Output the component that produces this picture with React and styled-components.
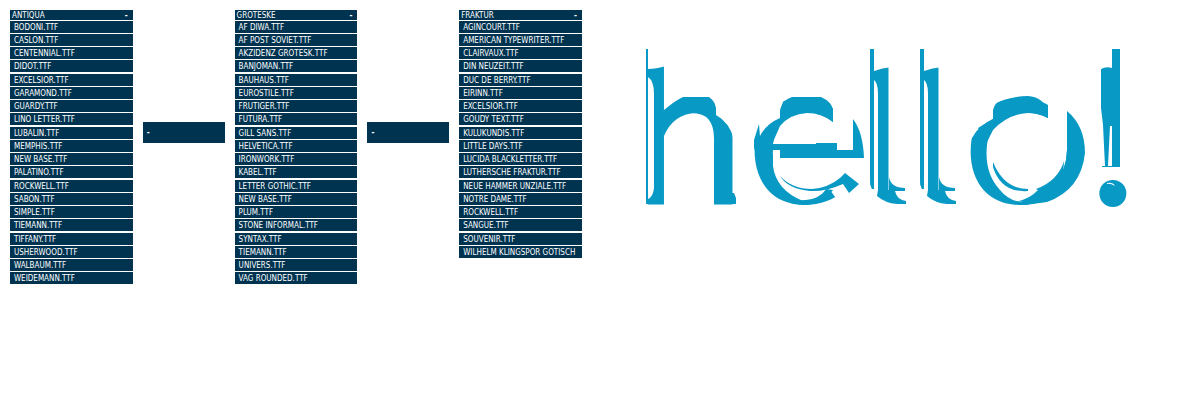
import React from "react";
import styled, { createGlobalStyle } from "styled-components";

const GlobalStyle = createGlobalStyle`
  * { box-sizing: border-box; }
  body {
    margin: 0;
    background: #fff;
    font-family: "DejaVu Sans Condensed", "DejaVu Sans Mono", sans-serif;
  }
`;

const Page = styled.main`
  display: grid;
  grid-template-columns: 572fr 608fr;
  padding: 10px;
`;

const Picker = styled.div`
  display: grid;
  grid-template-columns: 123fr 82fr 123fr 82fr 123fr;
  column-gap: 10px;
  align-items: start;
`;

const Column = styled.section`
  min-width: 0;
  color: #fff;
  font-size: 8px;
`;

const ColumnHead = styled.header`
  display: flex;
  justify-content: space-between;
  height: 10px;
  margin-bottom: 1px;
  padding: 1px 5px 0 2px;
  background: #003350;
  line-height: 10px;
`;

const Title = styled.h2`
  margin: 0;
  font: inherit;
`;

const Toggle = styled.button`
  padding: 0;
  border: 0;
  background: none;
  color: inherit;
  font: inherit;
  font-weight: 700;
`;

const FontList = styled.ul`
  margin: 0;
  padding: 0;
  list-style: none;
`;

const FontRow = styled.li`
  height: 12px;
  margin-bottom: 1px;
  padding: 1px 0 0 4px;
  overflow: hidden;
  background: #003350;
  line-height: 12px;
  white-space: nowrap;

  &:nth-child(4n) { margin-bottom: 2px; }
`;

const FontLink = styled.a`
  color: inherit;
  text-decoration: none;
`;

const Slot = styled.div`
  height: 21px;
  margin-top: 112px;
  padding-left: 4px;
  background: #003350;
  color: #fff;
  font-size: 8px;
  font-weight: 700;
  line-height: 21px;
`;

const Preview = styled.svg`
  display: block;
  width: 490px;
  max-width: 100%;
  margin: 30px 0 0 58px;
  fill: #0899c5;
`;

const Cut = styled.g`
  fill: #fff;
`;

const groups = [
  ["ANTIQUA", ["BODONI", "CASLON", "CENTENNIAL", "DIDOT", "EXCELSIOR", "GARAMOND", "GUARDY", "LINO LETTER", "LUBALIN", "MEMPHIS", "NEW BASE", "PALATINO", "ROCKWELL", "SABON", "SIMPLE", "TIEMANN", "TIFFANY", "USHERWOOD", "WALBAUM", "WEIDEMANN"]],
  ["GROTESKE", ["AF DIWA", "AF POST SOVIET", "AKZIDENZ GROTESK", "BANJOMAN", "BAUHAUS", "EUROSTILE", "FRUTIGER", "FUTURA", "GILL SANS", "HELVETICA", "IRONWORK", "KABEL", "LETTER GOTHIC", "NEW BASE", "PLUM", "STONE INFORMAL", "SYNTAX", "TIEMANN", "UNIVERS", "VAG ROUNDED"]],
  ["FRAKTUR", ["AGINCOURT", "AMERICAN TYPEWRITER", "CLAIRVAUX", "DIN NEUZEIT", "DUC DE BERRY", "EIRINN", "EXCELSIOR", "GOUDY TEXT", "KULUKUNDIS", "LITTLE DAYS", "LUCIDA BLACKLETTER", "LUTHERSCHE FRAKTUR", "NEUE HAMMER UNZIALE", "NOTRE DAME", "ROCKWELL", "SANGUE", "SOUVENIR", "WILHELM KLINGSPOR GOTISCH"]],
];

function FontColumn({ title, fonts }) {
  return (
    <Column>
      <ColumnHead>
        <Title>{title}</Title>
        <Toggle type="button">-</Toggle>
      </ColumnHead>
      <FontList>
        {fonts.map((name) => (
          <FontRow key={name}>
            <FontLink href="#preview">{name.length > 22 ? name : `${name}.TTF`}</FontLink>
          </FontRow>
        ))}
      </FontList>
    </Column>
  );
}

/* Ascender carved into a hairline and a stem, with a curled foot. */
function AscenderCuts({ x }) {
  return (
    <g transform={`translate(${x} 0)`}>
      <Cut>
        <path d="M4 0H22V27Q12 28 4 31Z" />
        <path d="M4 40Q8 43 8 54V170H-2V140L2 149H4Z" />
        <path d="M7 154H22V170H7Z" />
      </Cut>
      <path d="M8 150H19V137Q21 148 35 148V151H25Q27 160 36 161V164H27Q15 163 7 156Z" />
    </g>
  );
}

export default function App() {
  return (
    <>
      <GlobalStyle />
      <Page>
        <Picker>
          {groups.map(([title, fonts], i) => (
            <React.Fragment key={title}>
              {i > 0 && <Slot>-</Slot>}
              <FontColumn title={title} fonts={fonts} />
            </React.Fragment>
          ))}
        </Picker>
        <Preview id="preview" viewBox="0 0 490 170" aria-label="hello!">
          <text y="164" fontFamily="Lato" fontSize="206">
            <tspan x="-9">h</tspan>
            <tspan x="106">e</tspan>
            <tspan x="215">l</tspan>
            <tspan x="265">l</tspan>
            <tspan x="322">o</tspan>
            <tspan x="435" fontFamily="Liberation Serif" fontSize="228">!</tspan>
          </text>

          {/* h */}
          <Cut>
            <path d="M4 0H26V26Q16 29 8 29V170H4Z" />
            <path d="M8 37Q14 41 14 54V148Q13 157 8 159Z" />
            <path d="M68 56Q74 59 76 68V75Q89 82 94 99H98V54H68Z" />
          </Cut>
          <path d="M6 9H8V164H6ZM92 153H94L96 158V164H92Z" />
          <path d="M24 70Q36 60 43 57H69Q76 61 76 75V85Q68 73 56 73Q33 74 24 96Z" />

          {/* e */}
          <Cut>
            <path d="M110 50H150Q141 60 140 78Q126 84 120 96L110 90Z" />
            <path d="M167 73C150 73 137 84 133 104V126Q136 150 163 161Q176 161 190 150L206 172H230V50H193V82Q182 73 167 73Z" />
          </Cut>
          <path d="M140 79V70Q142 60 152 57H181Q192 62 193 70V82Q182 73 167 73Q150 74 140 86L133 102L128 86Z" />
          <path d="M133 104H176V103H197V110H213V79Q223 92 224 118H140V110H133Z" />
          <path d="M140 136Q152 149 172 149Q188 148 200 138L205 133L219 144L209 153L203 144Q185 152 170 151Q148 149 140 136Z" />
          <path d="M155 160Q178 162 186 149L193 150Q184 163 165 165L150 163Z" />
          <path d="M114 110V100L119 84L120 97Z" />

          {/* l l */}
          <AscenderCuts x={230} />
          <path d="M230 9H234V149H232L230 140Z" />
          <AscenderCuts x={280} />
          <path d="M280 9H284V149H282L280 140Z" />

          {/* o */}
          <Cut>
            <path d="M326 50H366Q354 60 353 79Q339 85 332 98L326 100Z" />
            <path d="M388 73C368 73 350 84 347 105Q344 133 360 150Q368 160 380 162Q426 150 427 110V50H408V78Q398 73 388 73Z" />
          </Cut>
          <path d="M353 79V70Q354 62 366 60Q376 56 388 56Q403 57 407 70L408 78Q398 73 388 73Q368 74 353 90L347 102L338 88Z" />
          <path d="M427 71Q445 86 445 113Q441 150 407 162L385 165L378 163Q425 156 427 110Z" />
          <path d="M353 122Q364 149 388 149V151Q361 153 353 127Z" />
          <path d="M396 149Q418 141 424 121Q424 148 397 160L375 162Q390 159 398 150Z" />

          {/* ! */}
          <Cut>
            <path d="M455 0H472V28Q466 26 461 29H455ZM480 0H490V130H480Z" />
          </Cut>
          <path d="M461 29H472V9H480V127H462V126H465L463 85L461 68Z" />
          <Cut>
            <path d="M470 86H472V126H468Z" />
            <path d="M467 143Q473 142 475 146Q470 143 467 144Z" />
          </Cut>
        </Preview>
      </Page>
    </>
  );
}
